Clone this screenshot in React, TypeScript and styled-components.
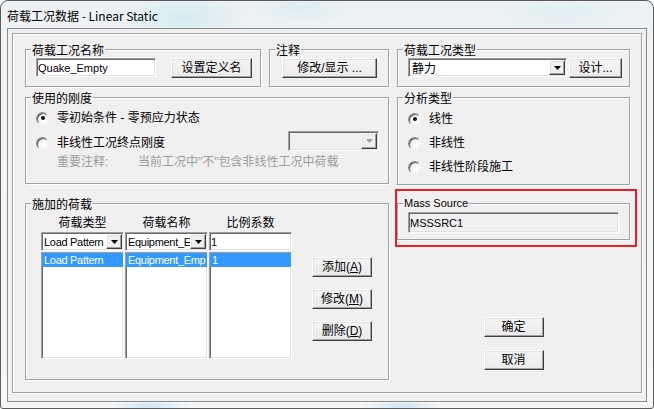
import React from "react";
import styled, { createGlobalStyle, css } from "styled-components";

const CJK = `"Noto Sans CJK SC", sans-serif`;
const MIX = `"Liberation Sans", "Noto Sans CJK SC", sans-serif`;

const GlobalStyle = createGlobalStyle`
  *, *::before, *::after { box-sizing: border-box; }
  html, body { margin: 0; padding: 0; background: #fafbfb; }
  body { font-family: ${MIX}; font-size: 12px; color: #000; }
  #root { width: 654px; height: 409px; }
`;

const sunken = css`
  border: 1px solid;
  border-color: #a0a0a0 #ffffff #ffffff #a0a0a0;
  box-shadow: inset 1px 1px 0 #696969, inset -1px -1px 0 #e3e3e3;
`;

const raised = css`
  border: 1px solid;
  border-color: #ffffff #404040 #404040 #ffffff;
  box-shadow: inset -1px -1px 0 #a0a0a0, inset 1px 1px 0 #e3e3e3;
`;

const etched = css`
  border: 1px solid #a0a0a0;
  box-shadow: inset 1px 1px 0 #ffffff, 1px 1px 0 #ffffff;
`;

const Window = styled.div`
  width: 654px;
  height: 409px;
  border: 1px solid #5c5c5c;
  border-radius: 8px 8px 3px 3px;
  overflow: hidden;
  display: flex;
  flex-direction: column;
  background:
    radial-gradient(ellipse 70px 26px at 185px 16px, rgba(176, 228, 236, 0.45), transparent),
    radial-gradient(ellipse 60px 22px at 300px 6px, rgba(176, 228, 236, 0.3), transparent),
    radial-gradient(ellipse 80px 24px at 560px 12px, rgba(190, 232, 240, 0.3), transparent),
    radial-gradient(ellipse 40px 6px at 150px 405px, rgba(150, 200, 235, 0.4), transparent),
    radial-gradient(ellipse 40px 6px at 400px 405px, rgba(150, 200, 235, 0.4), transparent),
    linear-gradient(#eff2f4, #f6f7f8);
`;

const TitleBar = styled.div`
  height: 27px;
  flex: none;
  padding: 2px 0 0 6px;
  display: flex;
  align-items: center;
  font-family: ${CJK};
  font-size: 12px;
  line-height: 16px;
  color: #000;
`;

const Frame = styled.div`
  flex: 1;
  display: flex;
  padding: 0 6px 6px;
`;

const Client = styled.div`
  flex: 1;
  display: flex;
  border: 1px solid #8a8c8e;
  background: #f0f0f0;
  padding: 4px 4px 8px 4px;
`;

const Panel = styled.div`
  flex: 1;
  ${etched};
  padding: 15px 11px 0 12px;
  display: grid;
  grid-template-columns: 364px 233px;
  column-gap: 8px;
  align-items: start;
`;

const Column = styled.div`
  display: flex;
  flex-direction: column;
`;

const Row = styled.div<{ $gap?: number }>`
  display: flex;
  align-items: flex-start;
  gap: ${(p) => p.$gap ?? 0}px;
`;

const Group = styled.div<{ $h: number; $w?: number; $mt?: number; $pad?: string }>`
  position: relative;
  flex: none;
  ${(p) => (p.$w ? `width: ${p.$w}px;` : "")}
  height: ${(p) => p.$h}px;
  margin-top: ${(p) => p.$mt ?? 0}px;
  padding: ${(p) => p.$pad ?? "0"};
  ${etched};
`;

const Legend = styled.span<{ $latin?: boolean }>`
  position: absolute;
  top: -8px;
  left: 5px;
  padding: 0 1px;
  background: #f0f0f0;
  font-family: ${(p) => (p.$latin ? `"Liberation Sans", sans-serif` : CJK)};
  font-size: ${(p) => (p.$latin ? 11 : 12)}px;
  line-height: 15px;
  white-space: nowrap;
`;

const TextBox = styled.div<{ $w: number; $h?: number; $disabled?: boolean }>`
  ${sunken};
  width: ${(p) => p.$w}px;
  height: ${(p) => p.$h ?? 19}px;
  flex: none;
  background: ${(p) => (p.$disabled ? "#f0f0f0" : "#ffffff")};
  padding: 0 0 0 1px;
  display: flex;
  align-items: center;
  overflow: hidden;
  white-space: nowrap;
  font-family: "Liberation Sans", sans-serif;
  font-size: 11px;
  line-height: 14px;
`;

const ComboBox = styled.div<{ $w: number; $h?: number; $disabled?: boolean }>`
  ${sunken};
  width: ${(p) => p.$w}px;
  height: ${(p) => p.$h ?? 19}px;
  flex: none;
  padding: 1px;
  display: flex;
  background: ${(p) => (p.$disabled ? "#f0f0f0" : "#ffffff")};
`;

const ComboText = styled.div<{ $cjk?: boolean }>`
  flex: 1;
  min-width: 0;
  overflow: hidden;
  white-space: nowrap;
  padding-left: ${(p) => (p.$cjk ? 2 : 1)}px;
  display: flex;
  align-items: center;
  font-family: ${(p) => (p.$cjk ? CJK : `"Liberation Sans", sans-serif`)};
  font-size: ${(p) => (p.$cjk ? 12 : 11)}px;
  letter-spacing: ${(p) => (p.$cjk ? 0 : -0.3)}px;
  line-height: 14px;
`;

const DropButton = styled.div`
  ${raised};
  width: 16px;
  flex: none;
  background: #f0f0f0;
  display: flex;
  align-items: center;
  justify-content: center;
`;

const PushButton = styled.div<{ $w: number; $h?: number }>`
  ${raised};
  width: ${(p) => p.$w}px;
  height: ${(p) => p.$h ?? 20}px;
  flex: none;
  background: linear-gradient(#f4f4f4, #ebebeb);
  display: flex;
  align-items: center;
  justify-content: center;
  font-family: ${MIX};
  font-size: 12px;
  line-height: 14px;
  white-space: nowrap;
  color: #000;
  padding-bottom: 1px;
`;

const RadioRow = styled.div<{ $mt?: number }>`
  display: flex;
  align-items: center;
  gap: 8px;
  height: 16px;
  margin-top: ${(p) => p.$mt ?? 0}px;
  font-family: ${MIX};
  font-size: 12px;
  line-height: 16px;
  white-space: nowrap;
`;

const RadioCircle = styled.span<{ $checked?: boolean }>`
  position: relative;
  width: 13px;
  height: 13px;
  flex: none;
  border-radius: 50%;
  border: 1px solid;
  border-color: #8a8a8a #f4f4f4 #f4f4f4 #8a8a8a;
  background: radial-gradient(circle at 65% 65%, #ffffff 0%, #f3f3f3 55%, #d9d9d9 100%);
  box-shadow: inset 1px 1px 0 #5a5a5a;
  &::after {
    content: "";
    display: ${(p) => (p.$checked ? "block" : "none")};
    position: absolute;
    left: 50%;
    top: 50%;
    width: 4px;
    height: 4px;
    margin: -2px 0 0 -2px;
    border-radius: 50%;
    background: #111;
  }
`;

const StiffLine = styled.div`
  display: flex;
  align-items: flex-end;
  justify-content: space-between;
  height: 20px;
  margin-top: 5px;
`;

const Note = styled.div`
  margin-top: 3px;
  padding-left: 21px;
  height: 16px;
  display: flex;
  align-items: center;
  font-family: ${MIX};
  font-size: 12px;
  line-height: 16px;
  color: #9d9d9d;
  white-space: nowrap;
`;

const NoteLabel = styled.span`
  display: inline-block;
  width: 81px;
`;

const LoadArea = styled.div`
  display: flex;
  align-items: flex-start;
`;

const LoadColumns = styled.div`
  display: flex;
  gap: 1px;
`;

const LoadColumn = styled.div`
  width: 83px;
  display: flex;
  flex-direction: column;
`;

const ColHeader = styled.div`
  height: 16px;
  text-align: center;
  font-family: ${CJK};
  font-size: 12px;
  line-height: 16px;
  margin-bottom: 2px;
`;

const ListBox = styled.div`
  ${sunken};
  margin-top: 1px;
  height: 107px;
  background: #ffffff;
  padding: 0;
  overflow: hidden;
`;

const ListItem = styled.div<{ $selected?: boolean }>`
  height: 14px;
  padding-left: 2px;
  background: ${(p) => (p.$selected ? "#3399ff" : "transparent")};
  color: ${(p) => (p.$selected ? "#ffffff" : "#000")};
  font-family: "Liberation Sans", sans-serif;
  font-size: 11px;
  letter-spacing: -0.3px;
  line-height: 14px;
  white-space: nowrap;
  overflow: hidden;
`;

const SideButtons = styled.div`
  display: flex;
  flex-direction: column;
  gap: 12px;
  margin-left: 20px;
  padding-top: 43px;
`;

const Highlight = styled.div`
  margin: 4px -7px 0 -2px;
  border: 2px solid #ec1f27;
  padding: 12px 5px 5px 0;
`;

const DialogButtons = styled.div`
  margin-top: 70px;
  display: flex;
  flex-direction: column;
  align-items: center;
  gap: 13px;
`;

const Arrow = ({ disabled }: { disabled?: boolean }) => (
  <svg width="7" height="4" viewBox="0 0 7 4">
    <polygon points="0,0 7,0 3.5,4" fill={disabled ? "#a0a0a0" : "#000"} />
  </svg>
);

const Combo = ({
  w,
  h,
  text,
  cjk,
  disabled,
}: {
  w: number;
  h?: number;
  text?: string;
  cjk?: boolean;
  disabled?: boolean;
}) => (
  <ComboBox $w={w} $h={h} $disabled={disabled}>
    <ComboText $cjk={cjk}>{text}</ComboText>
    <DropButton>
      <Arrow disabled={disabled} />
    </DropButton>
  </ComboBox>
);

const Radio = ({ checked, children, mt }: { checked?: boolean; children: React.ReactNode; mt?: number }) => (
  <RadioRow $mt={mt}>
    <RadioCircle $checked={checked} />
    <span>{children}</span>
  </RadioRow>
);

export default function App() {
  return (
    <>
      <GlobalStyle />
      <Window>
        <TitleBar>荷载工况数据 - Linear Static</TitleBar>
        <Frame>
          <Client>
            <Panel>
              <Column>
                <Row $gap={8}>
                  <Group $w={236} $h={38} $pad="8px 0 0 10px">
                    <Legend>荷载工况名称</Legend>
                    <Row $gap={15}>
                      <TextBox $w={120}>Quake_Empty</TextBox>
                      <PushButton $w={81}>设置定义名</PushButton>
                    </Row>
                  </Group>
                  <Group $w={120} $h={38} $pad="8px 0 0 12px">
                    <Legend>注释</Legend>
                    <PushButton $w={95}>修改/显示 ...</PushButton>
                  </Group>
                </Row>

                <Group $h={87} $mt={10} $pad="12px 9px 0 10px">
                  <Legend>使用的刚度</Legend>
                  <Radio checked>零初始条件 - 零预应力状态</Radio>
                  <StiffLine>
                    <Radio>非线性工况终点刚度</Radio>
                    <Combo w={91} h={20} disabled />
                  </StiffLine>
                  <Note>
                    <NoteLabel>重要注释:</NoteLabel>
                    当前工况中"不"包含非线性工况中荷载
                  </Note>
                </Group>

                <Group $h={177} $mt={19} $pad="10px 0 0 15px">
                  <Legend>施加的荷载</Legend>
                  <LoadArea>
                    <LoadColumns>
                      <LoadColumn>
                        <ColHeader>荷载类型</ColHeader>
                        <Combo w={83} text="Load Pattern" />
                        <ListBox>
                          <ListItem $selected>Load Pattern</ListItem>
                        </ListBox>
                      </LoadColumn>
                      <LoadColumn>
                        <ColHeader>荷载名称</ColHeader>
                        <Combo w={83} text="Equipment_E" />
                        <ListBox>
                          <ListItem $selected>Equipment_Emp</ListItem>
                        </ListBox>
                      </LoadColumn>
                      <LoadColumn>
                        <ColHeader>比例系数</ColHeader>
                        <TextBox $w={83}>1</TextBox>
                        <ListBox>
                          <ListItem $selected>1</ListItem>
                        </ListBox>
                      </LoadColumn>
                    </LoadColumns>
                    <SideButtons>
                      <PushButton $w={60}>
                        添加(<u>A</u>)
                      </PushButton>
                      <PushButton $w={60}>
                        修改(<u>M</u>)
                      </PushButton>
                      <PushButton $w={60}>
                        删除(<u>D</u>)
                      </PushButton>
                    </SideButtons>
                  </LoadArea>
                </Group>
              </Column>

              <Column>
                <Group $h={38} $pad="8px 0 0 10px">
                  <Legend>荷载工况类型</Legend>
                  <Row $gap={2}>
                    <Combo w={159} text="静力" cjk />
                    <PushButton $w={53}>设计...</PushButton>
                  </Row>
                </Group>

                <Group $h={88} $mt={10} $pad="13px 0 0 10px">
                  <Legend>分析类型</Legend>
                  <Radio checked>线性</Radio>
                  <Radio mt={8}>非线性</Radio>
                  <Radio mt={8}>非线性阶段施工</Radio>
                </Group>

                <Highlight>
                  <Group $h={37} $pad="8px 0 0 10px">
                    <Legend $latin>Mass Source</Legend>
                    <TextBox $w={211} $h={21} $disabled>
                      MSSSRC1
                    </TextBox>
                  </Group>
                </Highlight>

                <DialogButtons>
                  <PushButton $w={60}>确定</PushButton>
                  <PushButton $w={60}>取消</PushButton>
                </DialogButtons>
              </Column>
            </Panel>
          </Client>
        </Frame>
      </Window>
    </>
  );
}
